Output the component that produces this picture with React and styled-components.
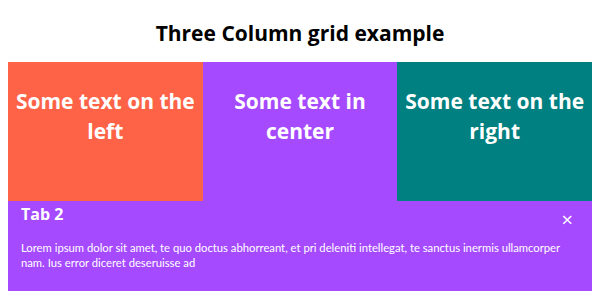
import styled, { createGlobalStyle } from 'styled-components';

const GlobalStyle = createGlobalStyle`
    body {
        margin: 8px;
        font-family: "Open Sans", "Noto Sans", sans-serif;
        background: white;
    }
`;

const Title = styled.h2`
    margin: 0;
    height: 54px;
    display: flex;
    align-items: center;
    justify-content: center;
    padding-bottom: 4px;
    box-sizing: border-box;
    font-size: 21px;
    font-weight: 700;
    color: #000;
`;

const Grid = styled.div`
    display: grid;
    grid-template-columns: repeat(3, 1fr);
`;

const Column = styled.div`
    height: 139px;
    box-sizing: border-box;
    padding: 24px 4px 0;
    background: ${(p) => p.$bg};
    color: white;
    text-align: center;
    font-size: 21px;
    font-weight: 700;
    line-height: 30px;
`;

const Panel = styled.div`
    background: #a64aff;
    color: white;
    padding: 1px 25px 21px 13px;
    display: flex;
    flex-direction: column;
`;

const PanelHead = styled.div`
    display: flex;
    justify-content: space-between;
    align-items: flex-start;
`;

const TabTitle = styled.h3`
    margin: 0;
    font-size: 16px;
    font-weight: 700;
    line-height: 24px;
`;

const Close = styled.span`
    font-size: 20px;
    line-height: 20px;
    margin-top: 8px;
    margin-right: -6px;
    cursor: pointer;
`;

const Text = styled.p`
    margin: 10px 0 0;
    font-family: "Lato", "Open Sans", sans-serif;
    font-size: 11.25px;
    line-height: 15px;
`;

const columns = [
    { bg: '#ff6347', text: 'Some text on the left' },
    { bg: '#a64aff', text: 'Some text in center' },
    { bg: '#008080', text: 'Some text on the right' },
];

const App = () => {
    return (
        <>
            <GlobalStyle />
            <Title>Three Column grid example</Title>
            <Grid>
                {columns.map((c) => (
                    <Column key={c.text} $bg={c.bg}>
                        {c.text}
                    </Column>
                ))}
            </Grid>
            <Panel>
                <PanelHead>
                    <TabTitle>Tab 2</TabTitle>
                    <Close>×</Close>
                </PanelHead>
                <Text>
                    Lorem ipsum dolor sit amet, te quo doctus abhorreant, et pri deleniti intellegat, te sanctus
                    inermis ullamcorper nam. Ius error diceret deseruisse ad
                </Text>
            </Panel>
        </>
    );
};

export default App;
